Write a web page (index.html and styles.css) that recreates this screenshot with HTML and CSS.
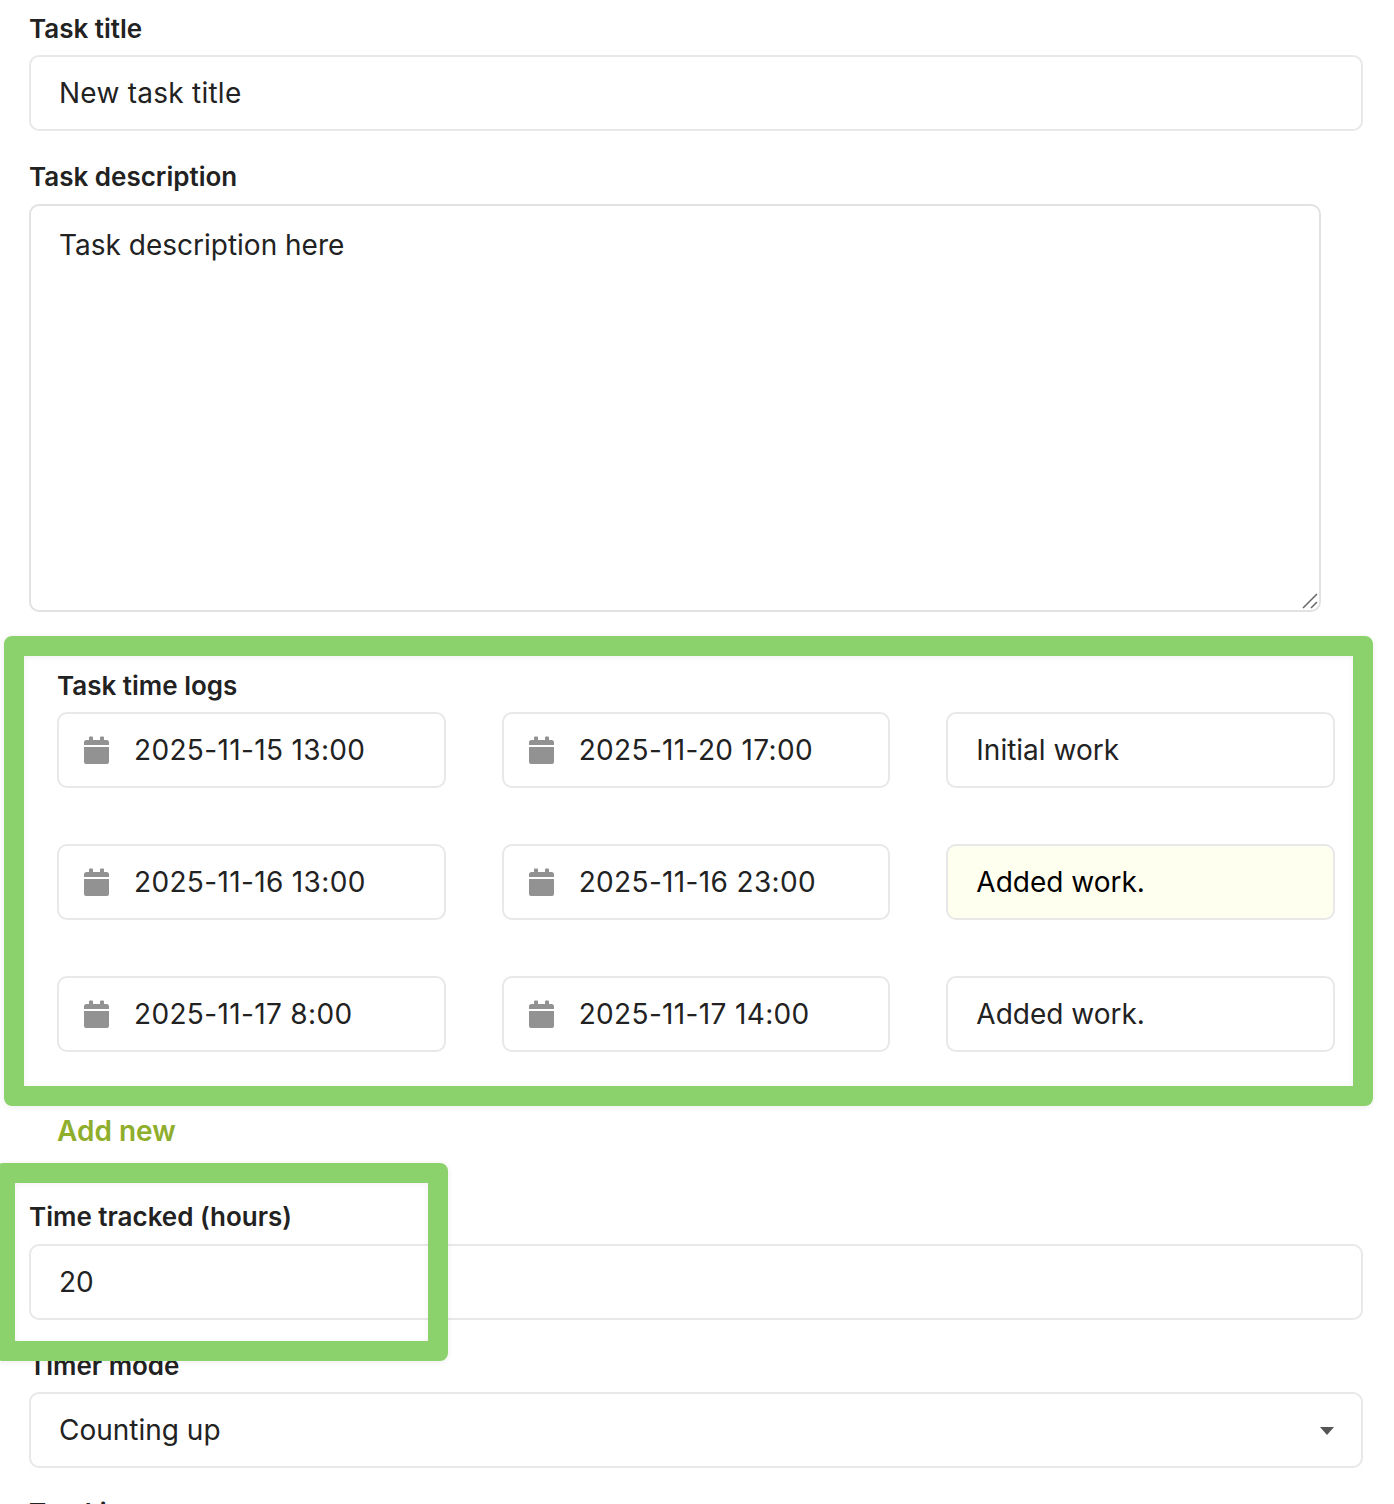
FILE: index.html
```html
<!DOCTYPE html>
<html lang="en">
<head>
<meta charset="utf-8">
<title>Task form</title>
<link rel="stylesheet" href="styles.css">
</head>
<body>
<svg class="sprite" width="0" height="0"><symbol id="cal" viewBox="0 0 25 28"><path d="M5 4V1.500a1 1 0 0 1 1-1h2a1 1 0 0 1 1 1V4h7V1.500a1 1 0 0 1 1-1h2a1 1 0 0 1 1 1V4h2.500A2.500 2.500 0 0 1 25 6.500V9H0V6.500A2.500 2.500 0 0 1 2.500 4zM0 11h25v15a2 2 0 0 1-2 2H2a2 2 0 0 1-2-2z"/></symbol></svg>
<form class="form">
  <div class="field">
    <label class="label">Task title</label>
    <div class="input wide-text">New task title</div>
  </div>
  <div class="field">
    <label class="label">Task description</label>
    <div class="textarea">Task description here
      <svg class="grip" width="16" height="16" viewBox="0 0 16 16"><path d="M1 15 15 1M9 15l6-6" /></svg>
    </div>
  </div>
  <div class="logs">
    <label class="label label-logs">Task time logs</label>
    <div class="log-grid">
      <div class="input date"><svg class="cal"><use href="#cal"/></svg>2025-11-15 13:00</div>
      <div class="input date"><svg class="cal"><use href="#cal"/></svg>2025-11-20 17:00</div>
      <div class="input">Initial work</div>
      <div class="input date"><svg class="cal"><use href="#cal"/></svg>2025-11-16 13:00</div>
      <div class="input date"><svg class="cal"><use href="#cal"/></svg>2025-11-16 23:00</div>
      <div class="input autofill">Added work.</div>
      <div class="input date"><svg class="cal"><use href="#cal"/></svg>2025-11-17 8:00</div>
      <div class="input date"><svg class="cal"><use href="#cal"/></svg>2025-11-17 14:00</div>
      <div class="input">Added work.</div>
    </div>
    <a class="add-new">Add new</a>
  </div>
  <div class="field">
    <label class="label">Time tracked (hours)</label>
    <div class="input">20</div>
  </div>
  <div class="field field-select">
    <label class="label">Timer mode</label>
    <div class="input select">Counting up<span class="caret"></span></div>
  </div>
  <div class="field">
    <label class="label">Tracking</label>
  </div>
</form>
<div class="highlight highlight-logs"></div>
<div class="highlight highlight-time"></div>
</body>
</html>
```
FILE: styles.css
```css
html, body {
  margin: 0;
  height: 1504px;
  overflow: hidden;
  background: #fff;
}
body {
  position: relative;
  font-family: Inter, "Liberation Sans", sans-serif;
  color: #222;
}
.sprite { position: absolute; }
.form {
  padding: 11.700px 31px 0 29px;
  display: flex;
  flex-direction: column;
}
.field { margin-bottom: 29px; }
.field-select { margin-bottom: 27.500px; }
.label {
  display: block;
  font-size: 26px;
  font-weight: 600;
  line-height: 34px;
  margin-bottom: 9.500px;
}
.input {
  box-sizing: border-box;
  height: 76px;
  border: 2px solid #e8e8e8;
  border-radius: 10px;
  padding: 0 28px;
  display: flex;
  align-items: center;
  font-size: 28px;
  background: #fff;
}
.wide-text { letter-spacing: .25px; }
.textarea {
  box-sizing: border-box;
  position: relative;
  width: 1292px;
  height: 408px;
  border: 2px solid #e2e2e2;
  border-radius: 10px;
  padding: 21px 28px;
  font-size: 28px;
  line-height: 36px;
}
.grip {
  position: absolute;
  right: 1px;
  bottom: 1px;
  fill: none;
  stroke: #666;
  stroke-width: 1.500;
}
.logs {
  padding: 0 28px;
  margin-top: 28.300px;
  margin-bottom: 51.300px;
}
.label-logs { margin-bottom: 9px; }
.log-grid {
  display: grid;
  grid-template-columns: repeat(3, 1fr);
  gap: 56px;
}
.date { padding-left: 25px; letter-spacing: .35px; }
.cal {
  width: 25px;
  height: 28px;
  fill: #929292;
  margin-right: 25px;
  flex: none;
}
.autofill { background: #fffff0; color: #000; }
.add-new {
  display: block;
  margin-top: 61px;
  font-size: 28px;
  font-weight: 600;
  line-height: 36px;
  color: #8fae2c;
}
.select { position: relative; }
.caret {
  position: absolute;
  right: 27px;
  top: 33px;
  border-style: solid;
  border-width: 8px 7px 0;
  border-color: #555 transparent transparent;
}
.highlight {
  position: absolute;
  box-sizing: border-box;
  border: 20px solid #8cd26c;
  border-radius: 8px;
  box-shadow: 0 1px 6px rgba(0,0,0,.08), inset 0 1px 6px rgba(0,0,0,.06);
}
.highlight-logs { left: 4px; top: 636px; width: 1369px; height: 470px; }
.highlight-time { left: -5px; top: 1163px; width: 453px; height: 198px; }
```
